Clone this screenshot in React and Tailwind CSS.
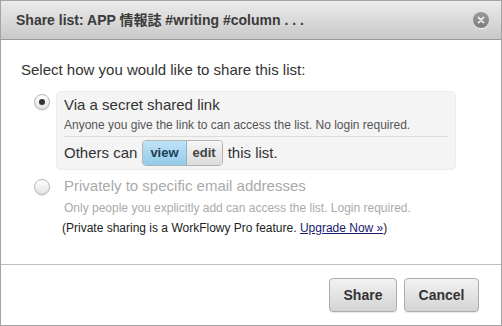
import React from 'react';

const Radio = ({ checked }) => (
  <span className="mt-[3px] flex h-[16px] w-[16px] shrink-0 items-center justify-center rounded-full border border-[#b5b5b5] bg-gradient-to-b from-[#ffffff] to-[#e2e2e2] shadow-[0_1px_1px_rgba(0,0,0,0.08)]">
    {checked && <span className="h-[6px] w-[6px] rounded-full bg-[#333]" />}
  </span>
);

export default function App() {
  return (
    <div
      className="h-[326px] w-[502px] border border-[#a3a3a3] bg-white text-[#333]"
      style={{ fontFamily: '"Liberation Sans", "Noto Sans CJK JP", Arial, sans-serif' }}
    >
      <div className="flex h-[39px] items-center justify-between border-b border-[#9a9a9a] bg-gradient-to-b from-[#ebebeb] to-[#c9c9c9] pl-[15px] pr-[12px]">
        <h1 className="text-[14px] font-bold text-[#3a3a3a]">Share list: APP 情報誌 #writing #column . . .</h1>
        <button className="flex h-[16px] w-[16px] items-center justify-center rounded-full bg-gradient-to-b from-[#9a9a9a] to-[#7d7d7d] shadow-[0_1px_0_rgba(255,255,255,0.7)]">
          <svg width="8" height="8" viewBox="0 0 8 8">
            <path d="M1.5 1.5 L6.5 6.5 M6.5 1.5 L1.5 6.5" stroke="#e8e8e8" strokeWidth="1.8" strokeLinecap="round" />
          </svg>
        </button>
      </div>

      <div className="h-[225px] border-b border-[#bdbdbd] pl-[20px] pr-[45px] pt-[21px]">
        <p className="text-[15px] leading-[18px]">Select how you would like to share this list:</p>

        <div className="mt-[12px] flex gap-[6px] pl-[13px]">
          <Radio checked />
          <div className="flex-1 rounded-[5px] border border-[#ebebeb] bg-[#f4f4f4] pb-[3px] pl-[7px] pr-[7px] pt-[3px]">
            <div className="text-[15px] leading-[20px]">Via a secret shared link</div>
            <div className="border-b border-[#dcdcdc] pb-[3px] pt-[2px] text-[12px] leading-[16px] text-[#555]">
              Anyone you give the link to can access the list. No login required.
            </div>
            <div className="flex items-center gap-[5px] pt-[3px] text-[15px]">
              <span>Others can</span>
              <div className="flex overflow-hidden rounded-[4px] border border-[#b3b3b3] text-[13px] font-bold">
                <span className="border-r border-[#8fb3c7] bg-gradient-to-b from-[#bfe3f7] to-[#93cbea] px-[7px] py-[2px] text-[#1d3d52]">view</span>
                <span className="bg-gradient-to-b from-[#f6f6f6] to-[#dcdcdc] px-[6px] py-[2px] text-[#444]">edit</span>
              </div>
              <span>this list.</span>
            </div>
          </div>
        </div>

        <div className="mt-[6px] flex gap-[6px] pl-[13px]">
          <Radio />
          <div className="pl-[8px]">
            <div className="text-[15px] leading-[20px] text-[#aaa]">Privately to specific email addresses</div>
            <div className="pt-[4px] text-[12px] leading-[16px] text-[#aaa]">
              Only people you explicitly add can access the list. Login required.
            </div>
          </div>
        </div>
        <p className="mt-[4px] pl-[41px] text-[12px] leading-[16px] text-[#222]">
          (Private sharing is a WorkFlowy Pro feature. <a className="text-[#1a1a6e] underline">Upgrade Now »</a>)
        </p>
      </div>

      <div className="flex justify-end gap-[7px] pr-[22px] pt-[13px]">
        <button className="h-[34px] w-[68px] rounded-[4px] border border-[#adadad] bg-gradient-to-b from-[#f2f2f2] to-[#d4d4d4] text-[14px] font-bold text-[#333] shadow-[0_1px_1px_rgba(0,0,0,0.1)]">Share</button>
        <button className="h-[34px] w-[75px] rounded-[4px] border border-[#adadad] bg-gradient-to-b from-[#f2f2f2] to-[#d4d4d4] text-[14px] font-bold text-[#333] shadow-[0_1px_1px_rgba(0,0,0,0.1)]">Cancel</button>
      </div>
    </div>
  );
}
